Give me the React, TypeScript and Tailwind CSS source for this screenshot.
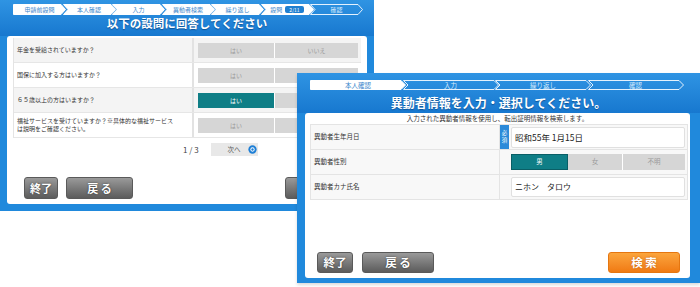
import React from "react";

type CrumbProps = {
  label: string;
  w: number;
  h: number;
  filled: boolean;
  first?: boolean;
  badge?: string;
  cls: string;
  text: string;
};

// chevron shaped breadcrumb step, drawn behind real text
function Crumb({ label, w, h, filled, first, badge, cls, text }: CrumbProps) {
  const n = 5;
  const pts = first
    ? `0.5,0.5 ${w - n},0.5 ${w - 0.5},${h / 2} ${w - n},${h - 0.5} 0.5,${h - 0.5}`
    : `0.5,0.5 ${w - n},0.5 ${w - 0.5},${h / 2} ${w - n},${h - 0.5} 0.5,${h - 0.5} ${n},${h / 2}`;
  return (
    <div className={`relative flex shrink-0 items-center justify-center ${first ? "" : "-ml-[3.5px]"} ${cls}`}>
      <svg className="absolute inset-0 h-full w-full overflow-visible" viewBox={`0 0 ${w} ${h}`}>
        <polygon
          points={pts}
          fill={filled ? "#ffffff" : "none"}
          stroke={filled ? "#ffffff" : "#e4f1fd"}
          strokeWidth={1}
        />
      </svg>
      <span className={`relative flex items-center gap-[3px] leading-none ${text} ${filled ? "text-[#3b86cc]" : "text-[#d6eafc]"}`}>
        {label}
        {badge && (
          <span className="rounded-[2px] bg-[#1f7fd0] px-[4px] py-[1px] text-[5px] text-white">{badge}</span>
        )}
      </span>
    </div>
  );
}

function DarkButton({ label, cls }: { label: string; cls: string }) {
  return (
    <button
      className={`flex items-center justify-center rounded-[3px] border border-[#5a5a5a] bg-gradient-to-b from-[#9a9a9a] to-[#5c5c5c] font-bold text-white [text-shadow:0_0_2px_rgba(0,0,0,0.6)] ${cls}`}
    >
      {label}
    </button>
  );
}

const questions = [
  { q: "年金を受給されていますか？", sel: false, grey: true },
  { q: "国保に加入する方はいますか？", sel: false, grey: false },
  { q: "６５歳以上の方はいますか？", sel: true, grey: true },
  { q: "福祉サービスを受けていますか？※具体的な福祉サービス\nは説明をご確認ください。", sel: false, grey: false },
];

const steps1 = [
  { label: "申請前設問", filled: true },
  { label: "本人確認", filled: true },
  { label: "入力", filled: true },
  { label: "異動者検索", filled: true },
  { label: "繰り返し", filled: true },
  { label: "設問", filled: true, badge: "2/11" },
  { label: "確認", filled: false },
];

const steps2 = [
  { label: "本人確認", filled: true },
  { label: "入力", filled: false },
  { label: "繰り返し", filled: false },
  { label: "確認", filled: false },
];

function QuestionWindow() {
  return (
    <section className="absolute left-0 top-0 flex h-[211px] w-[374px] flex-col bg-[#2089dc]">
      <header className="flex h-[36px] flex-col bg-gradient-to-b from-[#2f94e3] to-[#1778cf]">
        <nav className="ml-[13px] mt-[4px] flex">
          {steps1.map((s, i) => (
            <Crumb
              key={s.label}
              label={s.label}
              filled={s.filled}
              badge={s.badge}
              first={i === 0}
              w={53}
              h={11}
              cls="h-[11px] w-[53px]"
              text="text-[6px]"
            />
          ))}
        </nav>
        <h1 className="text-center text-[11.5px] font-bold leading-[17px] text-white [text-shadow:0_1px_1px_rgba(0,40,90,0.5)]">
          以下の設問に回答してください
        </h1>
      </header>

      <div className="mx-[7px] mb-[7px] flex flex-1 flex-col rounded-[3px] bg-white px-[6px] pt-[2px]">
        <div className="border-l border-[#e4e4e4]">
          {questions.map((r) => (
            <div key={r.q} className={`flex h-[25px] border-b border-[#e6e6e6] ${r.grey ? "bg-[#f4f4f4]" : "bg-white"}`}>
              <div className="flex w-[180px] items-center whitespace-pre-line border-r-2 border-[#e2e2e2] pl-[3px] text-[6px] leading-[8px] text-[#333]">
                {r.q}
              </div>
              <div className="flex flex-1 items-center pl-[4px] pr-[3px]">
                <div className="flex h-[15px] w-full text-[6px]">
                  <div
                    className={`flex w-[77px] items-center justify-center border-r border-white ${
                      r.sel ? "bg-[#0f7e86] text-white" : "bg-[#d6d6d6] text-[#9a9a9a]"
                    }`}
                  >
                    はい
                  </div>
                  <div className="flex flex-1 items-center justify-center bg-[#d6d6d6] text-[#9a9a9a]">いいえ</div>
                </div>
              </div>
            </div>
          ))}
        </div>

        <div className="mt-[5px] flex h-[13px] items-center pl-[170px]">
          <span className="text-[8px] text-[#444]">1 / 3</span>
          <button className="ml-[12px] flex h-[13px] w-[47px] items-center gap-[7px] bg-[#e8e8e8] pl-[17px] text-[6.5px] text-[#555]">
            次へ
            <svg width="9" height="9" viewBox="0 0 10 10">
              <circle cx="5" cy="5" r="4.6" fill="#1e7fd6" />
              <circle cx="5" cy="5" r="2.4" fill="#ffffff" />
              <circle cx="5" cy="5" r="1.3" fill="#1e7fd6" />
            </svg>
          </button>
        </div>

        <div className="mt-auto flex items-center justify-between pb-[5px] pl-[11px] pr-[6px]">
          <div className="flex gap-[8px]">
            <DarkButton label="終了" cls="h-[22px] w-[34px] text-[11px]" />
            <DarkButton label="戻 る" cls="h-[22px] w-[67px] text-[11px]" />
          </div>
          {/* mostly hidden behind the second window */}
          <DarkButton label="" cls="h-[22px] w-[70px] text-[11px]" />
        </div>
      </div>
    </section>
  );
}

function SearchWindow() {
  return (
    <section className="absolute left-[297px] top-[73px] flex h-[210px] w-[403px] flex-col bg-[#2089dc] shadow-[0_2px_3px_rgba(0,0,0,0.15)]">
      <header className="flex h-[40px] flex-col bg-gradient-to-b from-[#2f94e3] to-[#1778cf]">
        <nav className="ml-[13px] mt-[7px] flex">
          {steps2.map((s, i) => (
            <Crumb
              key={s.label}
              label={s.label}
              filled={s.filled}
              first={i === 0}
              w={96}
              h={10}
              cls="h-[10px] w-[96px]"
              text="text-[6.5px]"
            />
          ))}
        </nav>
        <h1 className="mt-[3px] text-center text-[12px] font-bold leading-[20px] text-white [text-shadow:0_1px_1px_rgba(0,40,90,0.5)]">
          異動者情報を入力・選択してください。
        </h1>
      </header>

      <div className="mb-[5px] ml-[8px] mr-[10px] flex flex-1 flex-col rounded-[3px] bg-white">
        <p className="text-center text-[6.5px] leading-[10px] text-[#333]">
          入力された異動者情報を使用し、転出証明情報を検索します。
        </p>

        <div className="ml-[5px] mr-[2px] mt-[1px] border border-[#e4e4e4] bg-[#f8f8f8] text-[6.5px] text-[#333]">
          <div className="flex h-[25px] border-b border-[#e4e4e4]">
            <div className="flex w-[189px] items-center border-r border-[#e4e4e4] pl-[3px]">異動者生年月日</div>
            <div className="flex flex-1 items-center">
              <div className="flex h-full w-[9px] flex-col items-center justify-center bg-[#2b8ad9] text-[5.5px] leading-[7px] text-white">
                <span>必</span>
                <span>須</span>
              </div>
              <div className="ml-[2px] mr-[2px] flex h-[21px] flex-1 items-center rounded-[2px] border border-[#e0e0e0] bg-white pl-[3px] text-[8.5px] text-[#222]">
                昭和55年 1月15日
              </div>
            </div>
          </div>
          <div className="flex h-[25px] border-b border-[#e4e4e4]">
            <div className="flex w-[189px] items-center border-r border-[#e4e4e4] pl-[3px]">異動者性別</div>
            <div className="flex flex-1 items-center pl-[11px] pr-[2px]">
              <div className="flex h-[16px] w-full text-[6.5px]">
                <div className="flex w-[57px] items-center justify-center border border-[#0a5f66] bg-[#0f7e86] text-white">男</div>
                <div className="flex w-[55px] items-center justify-center border-r border-white bg-[#d6d6d6] text-[#9a9a9a]">女</div>
                <div className="flex flex-1 items-center justify-center bg-[#d6d6d6] text-[#9a9a9a]">不明</div>
              </div>
            </div>
          </div>
          <div className="flex h-[24px]">
            <div className="flex w-[189px] items-center border-r border-[#e4e4e4] pl-[3px]">異動者カナ氏名</div>
            <div className="flex flex-1 items-center pl-[11px] pr-[2px]">
              <div className="flex h-[20px] w-full items-center rounded-[2px] border border-[#e0e0e0] bg-white pl-[3px] text-[8px] text-[#222]">
                ニホン　タロウ
              </div>
            </div>
          </div>
        </div>

        <div className="mt-auto flex items-center justify-between pb-[5px] pl-[12px] pr-[10px]">
          <div className="flex gap-[9px]">
            <DarkButton label="終了" cls="h-[21px] w-[36px] text-[11.5px]" />
            <DarkButton label="戻 る" cls="h-[21px] w-[72px] text-[11.5px]" />
          </div>
          <button className="flex h-[21px] w-[72px] items-center justify-center rounded-[3px] border border-[#e57610] bg-gradient-to-b from-[#fba53c] to-[#f07a10] text-[11.5px] font-bold text-white [text-shadow:0_0_2px_rgba(150,60,0,0.6)]">
            検 索
          </button>
        </div>
      </div>
    </section>
  );
}

export default function App() {
  return (
    <div className="relative h-[287px] w-[700px] overflow-hidden bg-white font-['Noto_Sans_CJK_JP',sans-serif]">
      <QuestionWindow />
      <SearchWindow />
    </div>
  );
}
